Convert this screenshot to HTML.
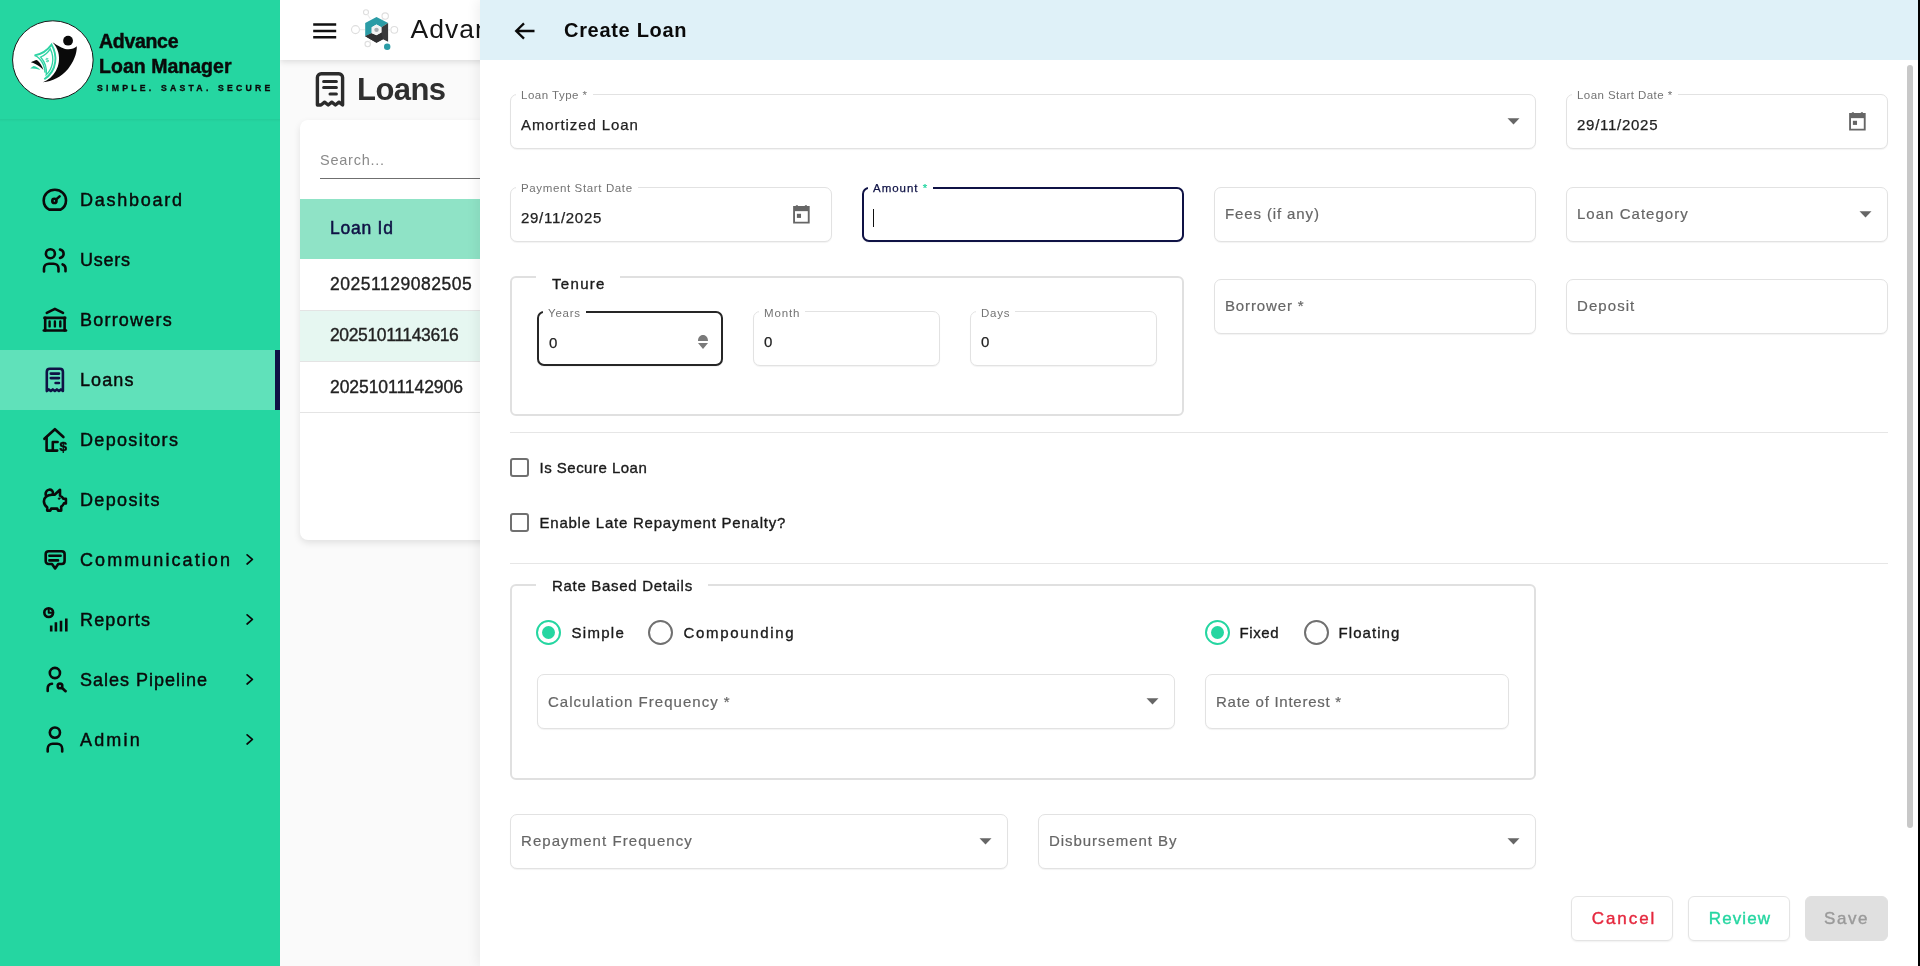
<!DOCTYPE html>
<html lang="en">
<head>
<meta charset="utf-8">
<title>Create Loan</title>
<style>
*{box-sizing:border-box;margin:0;padding:0}
html,body{width:1920px;height:966px;overflow:hidden;background:#fafafa;font-family:"Liberation Sans",sans-serif;color:#111}
.abs{position:absolute}
#sidebar,#main,#drawer{will-change:transform}
.t{position:absolute;white-space:nowrap}
#sidebar{position:absolute;left:0;top:0;width:280px;height:966px;background:#25d6a1}
#sidebar .logo-sep{position:absolute;left:0;top:119px;width:280px;height:3px;background:linear-gradient(rgba(0,0,0,.05),rgba(0,0,0,0))}
.brand{position:absolute;left:99px;font-weight:bold;color:#0a0a0a;white-space:nowrap;-webkit-text-stroke:.45px #0a0a0a}
.mi{position:absolute;left:0;width:280px;height:60px}
.mi.active{background:rgba(255,255,255,.27);border-right:5px solid #0f1245}
.mi svg.ic{position:absolute;left:41px;top:16px;width:28px;height:28px}
.mi span{position:absolute;left:80px;top:-.5px;line-height:60px;font-size:18px;color:#0a0a0a;white-space:nowrap;-webkit-text-stroke:.45px #0a0a0a}
.mi svg.chev{position:absolute;left:243px;top:22px;width:14px;height:16px}
#main{position:absolute;left:280px;top:0;width:1640px;height:966px;background:#fafafa;overflow:hidden}
#topbar{position:absolute;left:0;top:0;width:1640px;height:60px;background:#fff;box-shadow:0 2px 6px rgba(0,0,0,.12)}
#card{position:absolute;left:20px;top:120px;width:1600px;height:420px;background:#fff;border-radius:8px;box-shadow:0 3px 7px rgba(0,0,0,.10)}
.row{position:absolute;left:0;width:1600px;border-bottom:1px solid #e4e4e4;font-size:17.5px;color:#222;padding-left:30px;white-space:nowrap;-webkit-text-stroke:.35px #222}
#drawer{position:absolute;left:480px;top:0;width:1440px;height:966px;background:#fff;box-shadow:-2px 0 12px rgba(0,0,0,.07)}
#dhead{position:absolute;left:0;top:0;width:1440px;height:60px;background:#dff1f8}
.f{position:absolute;border:1px solid #e2e2e2;border-radius:7px;background:#fff;box-shadow:0 1px 1px rgba(0,0,0,.05)}
.f .lab{position:absolute;left:5px;top:-8px;padding:0 5px;background:#fff;font-size:11.5px;color:#737373;white-space:nowrap;line-height:16px}
.f .val{position:absolute;left:10px;top:0;font-size:15px;color:#222;white-space:nowrap;-webkit-text-stroke:.25px #222}
.f .ph{position:absolute;left:10px;top:0;font-size:15px;color:#666;white-space:nowrap;-webkit-text-stroke:.2px #666}
.f svg.dd{position:absolute;right:15px;width:13px;height:7px}
.f svg.cal{position:absolute;right:19.9px;width:18.8px;height:20.7px}
.fs{position:absolute;border:2px solid #e0e0e0;border-radius:6px}
.fs .leg{position:absolute;background:#fff;font-size:15px;color:#1a1a1a;white-space:nowrap;-webkit-text-stroke:.35px #1a1a1a}
.hr{position:absolute;left:30px;width:1378px;height:1px;background:#e6e6e6}
.cb{position:absolute;width:19.5px;height:19.4px;border:2px solid #707070;border-radius:3px;background:#fff}
.cl{position:absolute;font-size:15px;color:#1a1a1a;white-space:nowrap;-webkit-text-stroke:.35px #1a1a1a}
.rd{position:absolute;width:25px;height:25px;border:2px solid #707070;border-radius:50%;background:#fff}
.rd.on{border-color:#25d6a1}
.rd.on::after{content:"";position:absolute;left:4px;top:4px;width:13px;height:13px;border-radius:50%;background:#25d6a1}
.btn{position:absolute;top:896px;height:45px;border:1px solid #e4e4e4;border-radius:6px;background:#fff;font-size:17px;text-align:center;line-height:43px;box-shadow:0 1px 2px rgba(0,0,0,.06);white-space:nowrap;-webkit-text-stroke:.4px}
</style>
</head>
<body>
<div id="sidebar">
<svg class="abs" style="left:10px;top:18px" width="86" height="86" viewBox="10 18 86 86">
 <ellipse cx="52.85" cy="60" rx="40.3" ry="39.2" fill="#fff" stroke="#1a1a1a" stroke-width="1"/>
 <circle cx="68.05" cy="40.7" r="4.9" fill="#0a0a0a"/>
 <path d="M52.5 42.2 C57 45 62 48.6 67 49.2 C71 49.6 74.5 48.4 76.8 46.3 C77 54 73.5 62 68 69 C61.5 77 52 81.5 43 82.3 C48.5 80 53 76 55.8 71 C59 65.5 59.8 58.5 58.3 52.5 C57.3 48.5 55.3 45 52.5 42.2 Z" fill="#0a0a0a"/>
 <g fill="none" stroke="#2fd3a4" stroke-linejoin="miter">
  <path d="M34.6 55.4 C41.5 54.2 47.5 50.2 51.6 44.6 C54.6 50 56 56 55.2 62 C54.3 69 50 75.5 44.3 79.3" stroke-width="1.9"/>
  <path d="M34.6 55.4 C38.5 57 41.5 60.5 43.3 64.5 C44.6 67.5 45.2 70 45 72.6" stroke-width="1.5"/>
  <path d="M40.6 57 C44.6 55.6 48 52.6 50.3 48.9 C52.6 53.5 53.3 58.5 52.4 63.3 C51.5 68 49.2 72 46.2 74.8 C47 69 45 62 40.6 57 Z" stroke-width="1.3"/>
 </g>
 <text x="45.6" y="62.2" font-family="Liberation Sans, sans-serif" font-size="6" font-weight="bold" fill="#2fd3a4" transform="rotate(-12 47 60)">$</text>
 <path d="M30.9 62.2 C32.8 61.2 35 60.2 36.9 59.9 C40 62.3 42.3 65.8 43.5 70.2 C41 67 37.6 64.4 30.9 62.2 Z" fill="#0a0a0a"/>
 <path d="M30.3 68.5 C31.4 67.5 32.6 66.6 33.7 66.1 C36.2 66.7 38.6 68 40.4 69.9 C37 68.9 33.6 68.6 30.3 68.5 Z" fill="#2fd3a4"/>
</svg>
<div class="brand" style="top:31px;font-size:19.5px;line-height:20px;letter-spacing:-0.3px">Advance</div>
<div class="brand" style="top:56px;font-size:19.5px;line-height:20px;letter-spacing:0.03px">Loan Manager</div>
<div class="brand" style="left:97px;top:82.5px;font-size:8.7px;line-height:10px;-webkit-text-stroke:.3px #0a0a0a;word-spacing:.8px;letter-spacing:3.24px">SIMPLE. SASTA. SECURE</div>
<div class="logo-sep"></div>
<div class="mi" style="top:170px"><svg class="ic" viewBox="0 0 28 28" fill="none" stroke="#0a0a0a" stroke-width="2.6" stroke-linecap="round" stroke-linejoin="round"><path d="M8.2 23.6 H19.6 C22.8 21.8 25 18.4 25 14.4 C25 8.4 20.2 3.8 13.85 3.8 C7.5 3.8 2.7 8.4 2.7 14.4 C2.7 18.4 4.9 21.8 8.2 23.6 Z"/><circle cx="13.4" cy="14.9" r="2.1"/><path d="M15.2 13.4 L18.6 10.4"/></svg><span style="letter-spacing:1.73px">Dashboard</span></div>
<div class="mi" style="top:230px"><svg class="ic" viewBox="0 0 28 28" fill="none" stroke="#0a0a0a" stroke-width="2.6" stroke-linecap="round" stroke-linejoin="round"><circle cx="9.4" cy="7.7" r="4.5"/><path d="M3 25.4 V22.4 C3 19.6 5.2 17.7 8 17.7 H12.5 C15.3 17.7 17.5 19.6 17.5 22.4 V25.4"/><path d="M19 3.6 C21.2 4.2 22.6 5.8 22.6 7.8 C22.6 9.8 21.2 11.4 19 12"/><path d="M21.6 18.4 C23.4 19 24.5 20.6 24.5 22.6 V25.2"/></svg><span style="letter-spacing:0.72px">Users</span></div>
<div class="mi" style="top:290px"><svg class="ic" viewBox="0 0 28 28" fill="none" stroke="#0a0a0a" stroke-width="2.6" stroke-linecap="round" stroke-linejoin="round"><path d="M5.8 6.8 L13.9 2.8 L22 6.8"/><path d="M3.4 11.9 H24.2"/><path d="M4.2 11.9 V24.4 M23.6 11.9 V24.4"/><path d="M2.8 24.5 H25"/><path d="M8.6 15.4 V20.4 M13.9 15.4 V20.4 M19.3 15.4 V20.4" stroke-width="2.4"/></svg><span style="letter-spacing:1.21px">Borrowers</span></div>
<div class="mi active" style="top:350px"><svg class="ic" viewBox="0 0 28 28" fill="none" stroke="#0f1245" stroke-width="2.6" stroke-linecap="round" stroke-linejoin="round"><path d="M5.8 25 V5.8 C5.8 4 7 2.7 8.8 2.7 H18.9 C20.7 2.7 21.9 4 21.9 5.8 V25 L19.9 23.4 L17.9 25 L15.9 23.4 L13.85 25 L11.8 23.4 L9.8 25 L7.8 23.4 Z"/><path d="M9.8 7.6 H18 M9.8 12.1 H18 M14.6 17 H18"/></svg><span style="letter-spacing:1.09px">Loans</span></div>
<div class="mi" style="top:410px"><svg class="ic" viewBox="0 0 28 28" fill="none" stroke="#0a0a0a" stroke-width="2.6" stroke-linecap="round" stroke-linejoin="round"><path d="M3.4 12.8 L13.9 3.2 L22.4 11"/><path d="M5.6 11.4 V24.6 H16.2"/><path d="M16.6 16 H11.8 V24.6"/><text x="18.4" y="25.2" font-family="Liberation Sans, sans-serif" font-size="13.5" font-weight="bold" fill="#0a0a0a" stroke="#0a0a0a" stroke-width=".5">$</text></svg><span style="letter-spacing:1.32px">Depositors</span></div>
<div class="mi" style="top:470px"><svg class="ic" viewBox="0 0 28 28" fill="none" stroke="#0a0a0a" stroke-width="2.6" stroke-linecap="round" stroke-linejoin="round"><path d="M6.2 21.4 C4 19.8 2.9 17.6 2.9 15.2 C2.9 11.4 6.4 8.7 11 8.7 H13.6 L19 3.8 V9.6 C20.6 10.4 21.8 11.4 22.5 12.8 H24.9 V17.4 H22.9 C22.4 18.7 21.4 19.8 20.2 20.6 V24.6 H17 L16.2 22.6 H10.2 L9.4 24.6 H6.2 Z"/><path d="M5.5 10.2 C4.5 8.8 4.4 6.9 5.4 5.4 C6.7 3.4 9.5 3.1 11.1 4.7 C12 5.7 12.2 7.1 11.7 8.3"/><circle cx="18.1" cy="12.6" r="0.8" fill="#0a0a0a" stroke-width="1"/></svg><span style="letter-spacing:1.34px">Deposits</span></div>
<div class="mi" style="top:530px"><svg class="ic" viewBox="0 0 28 28" fill="none" stroke="#0a0a0a" stroke-width="2.6" stroke-linecap="round" stroke-linejoin="round"><path d="M7.6 5.2 H20.7 C22.4 5.2 23.6 6.4 23.6 8.1 V15.1 C23.6 16.8 22.4 18 20.7 18 H17.2 L14.1 22.4 L11 18 H7.6 C5.9 18 4.7 16.8 4.7 15.1 V8.1 C4.7 6.4 5.9 5.2 7.6 5.2 Z"/><path d="M8.4 9.8 H19.6 M8.4 14.4 H17"/></svg><span style="letter-spacing:2.07px">Communication</span><svg class="chev" viewBox="0 0 14 16" fill="none" stroke="#0a0a0a" stroke-width="1.7" stroke-linecap="round" stroke-linejoin="round"><path d="M4.1 2.8 L9.4 7.4 L4.1 12"/></svg></div>
<div class="mi" style="top:590px"><svg class="ic" viewBox="0 0 28 28" fill="none" stroke="#0a0a0a" stroke-width="2.6" stroke-linecap="round" stroke-linejoin="round"><circle cx="7.7" cy="6.6" r="4.4"/><path d="M7.7 3.8 V6.8 H10.8" stroke-width="2"/><path d="M10.2 19.6 V25.5 M14.9 16.3 V25.5 M20 14.7 V25.5 M25.3 12.5 V25.5" stroke-linecap="butt"/></svg><span style="letter-spacing:1.15px">Reports</span><svg class="chev" viewBox="0 0 14 16" fill="none" stroke="#0a0a0a" stroke-width="1.7" stroke-linecap="round" stroke-linejoin="round"><path d="M4.1 2.8 L9.4 7.4 L4.1 12"/></svg></div>
<div class="mi" style="top:650px"><svg class="ic" viewBox="0 0 28 28" fill="none" stroke="#0a0a0a" stroke-width="2.6" stroke-linecap="round" stroke-linejoin="round"><circle cx="13.9" cy="7" r="5.1"/><path d="M6.7 25 V22.6 C6.7 19.8 8.4 17.8 11 17.7"/><circle cx="19" cy="19.9" r="2.3"/><path d="M20.9 21.8 L24.6 25.2"/></svg><span style="letter-spacing:0.99px">Sales Pipeline</span><svg class="chev" viewBox="0 0 14 16" fill="none" stroke="#0a0a0a" stroke-width="1.7" stroke-linecap="round" stroke-linejoin="round"><path d="M4.1 2.8 L9.4 7.4 L4.1 12"/></svg></div>
<div class="mi" style="top:710px"><svg class="ic" viewBox="0 0 28 28" fill="none" stroke="#0a0a0a" stroke-width="2.6" stroke-linecap="round" stroke-linejoin="round"><circle cx="13.9" cy="6.6" r="5.1"/><path d="M6.7 25.5 V22.7 C6.7 19.7 8.9 17.7 11.7 17.7 H16.2 C19 17.7 21.2 19.7 21.2 22.7 V25.5"/></svg><span style="letter-spacing:2.17px">Admin</span><svg class="chev" viewBox="0 0 14 16" fill="none" stroke="#0a0a0a" stroke-width="1.7" stroke-linecap="round" stroke-linejoin="round"><path d="M4.1 2.8 L9.4 7.4 L4.1 12"/></svg></div>
</div>
<div id="main">
<div id="topbar">
 <svg class="abs" style="left:32px;top:22px" width="26" height="18" viewBox="0 0 26 18" stroke="#111" stroke-width="2.5" stroke-linecap="butt"><path d="M1.2 2.6 H24.2 M1.2 8.9 H24.2 M1.2 15.3 H24.2"/></svg>
 <svg class="abs" style="left:68px;top:6px" width="52" height="48" viewBox="0 0 52 48">
  <g fill="none" stroke="#dedede" stroke-width="1.1"><circle cx="18" cy="6.3" r="2.5"/><circle cx="37.2" cy="10.1" r="3.2"/><circle cx="7.5" cy="23.6" r="4"/><circle cx="46.3" cy="23.85" r="3.4"/><circle cx="19.7" cy="38.1" r="2.7"/><path d="M11.5 23.6 H17 M19.4 8.4 L22.5 13 M35.4 12.8 L34 14 M42.9 23.85 H40.5 M21.2 35.8 L23 33.6" stroke="#ececec"/></g>
  <path d="M17.2 17.1 L28.5 10.9 L40.1 17.1 L33.4 21.2 L28.5 18.5 L23.7 21.2 V27.3 L17.2 30.3 Z" fill="#2b9ca6"/>
  <path d="M17.2 30.3 L28.5 36.8 L35 33.3 L40.1 35.7 V17.1 L33.4 21.2 V26.5 L28.5 29.2 L23.7 27.3 Z" fill="#3a3a3c"/>
  <path d="M17.2 30.3 L23.7 27.3 L28.5 29.2 L33.4 26.5 L35 33.3 L28.5 36.8 Z" fill="#303032"/>
  <path d="M28.5 18.5 L33.4 21.2 V26.5 L28.5 29.2 L23.7 27.3 V21.2 Z" fill="#f4f4f4"/>
  <circle cx="28.5" cy="23.85" r="2.2" fill="#a9aeb3"/>
  <circle cx="39.2" cy="40.8" r="3.2" fill="#2b9ca6"/>
 </svg>
 <div class="t" style="left:130.5px;top:12px;font-size:26.5px;line-height:34px;color:#151515;letter-spacing:1px">Advance Loan Manager</div>
</div>
<svg class="abs" style="left:34px;top:70px" width="32" height="38" viewBox="0 0 32 38" fill="none" stroke="#2b2b2b" stroke-width="3.4" stroke-linejoin="round" stroke-linecap="round"><path d="M3.4 35 V7.6 C3.4 5.4 5 3.8 7.2 3.8 H24.8 C27 3.8 28.6 5.4 28.6 7.6 V35 L25 32.2 L21.4 35 L17.8 32.2 L14.2 35 L10.6 32.2 L7 35 Z"/><path d="M9.6 11.4 H22.4 M9.6 17.6 H22.4 M16 24 H22.4" stroke-width="3"/></svg>
<div class="t" style="left:77px;top:67.5px;font-size:31px;line-height:44px;font-weight:bold;color:#2f2f2f;letter-spacing:-0.56px">Loans</div>
<div id="card">
 <div class="t" style="left:20px;top:30px;font-size:14.5px;line-height:20px;color:#8a8a8a;letter-spacing:0.75px">Search...</div>
 <div class="abs" style="left:20px;top:58px;width:1560px;height:1px;background:#6f6f6f"></div>
 <div class="abs" style="left:0;top:79px;width:1600px;height:60px;background:#8fe3c6"></div>
 <div class="t" style="left:30px;top:79px;line-height:58px;font-size:17.5px;color:#0f1245;letter-spacing:0.75px;-webkit-text-stroke:.5px #0f1245">Loan Id</div>
 <div class="row" style="top:139px;height:52px;line-height:50px;background:#fff;letter-spacing:0.53px">20251129082505</div>
 <div class="row" style="top:191px;height:51px;line-height:49px;background:#e6f7f1;letter-spacing:-0.37px">20251011143616</div>
 <div class="row" style="top:242px;height:51px;line-height:50px;background:#fff;letter-spacing:-0.06px">20251011142906</div>
</div>
</div>
<div id="drawer">
<div id="dhead">
 <svg class="abs" style="left:33px;top:21px" width="24" height="20" viewBox="0 0 24 20" fill="none" stroke="#0a0a0a" stroke-width="2.3" stroke-linecap="butt" stroke-linejoin="miter"><path d="M21.5 10 H3.5 M11 2.4 L3.2 10 L11 17.6"/></svg>
 <div class="t" style="left:84px;top:15px;font-size:20px;line-height:30px;font-weight:bold;color:#0a0a0a;letter-spacing:0.69px">Create Loan</div>
</div>
<div class="f" style="left:30px;top:94px;width:1026px;height:55px;"><div class="lab" style="letter-spacing:0.49px;">Loan Type *</div><div class="val" style="line-height:59px;letter-spacing:0.9px">Amortized Loan</div><svg class="dd" style="top:23.3px" viewBox="0 0 13 7"><path d="M0.5 0.3 H12.5 L6.5 6.6 Z" fill="#666"/></svg></div>
<div class="f" style="left:1086px;top:94px;width:322px;height:55px;"><div class="lab" style="letter-spacing:0.43px;">Loan Start Date *</div><div class="val" style="line-height:59px;letter-spacing:0.73px">29/11/2025</div><svg class="cal" style="top:15.9px" viewBox="0 0 20 22"><path d="M5.2 1.2 V4 M14.8 1.2 V4" stroke="#666" stroke-width="2.2"/><path d="M2.2 3.2 H17.8 V19.8 H2.2 Z" fill="none" stroke="#666" stroke-width="2"/><path d="M2.2 3.2 H17.8 V7.6 H2.2 Z" fill="#666"/><rect x="5.2" y="10.4" width="4.4" height="4.4" fill="#666"/></svg></div>
<div class="f" style="left:30px;top:187px;width:322px;height:55px;"><div class="lab" style="letter-spacing:0.63px;">Payment Start Date</div><div class="val" style="line-height:59px;letter-spacing:0.7px">29/11/2025</div><svg class="cal" style="top:15.9px" viewBox="0 0 20 22"><path d="M5.2 1.2 V4 M14.8 1.2 V4" stroke="#666" stroke-width="2.2"/><path d="M2.2 3.2 H17.8 V19.8 H2.2 Z" fill="none" stroke="#666" stroke-width="2"/><path d="M2.2 3.2 H17.8 V7.6 H2.2 Z" fill="#666"/><rect x="5.2" y="10.4" width="4.4" height="4.4" fill="#666"/></svg></div>
<div class="f" style="left:382px;top:187px;width:322px;height:55px;border:2px solid #0f1245"><div class="lab" style="letter-spacing:0.97px;color:#0f1245;left:4px;top:-9px;-webkit-text-stroke:.25px #0f1245">Amount <i style="font-style:normal;color:#25d6a1;-webkit-text-stroke:.25px #25d6a1">*</i></div><div class="abs" style="left:9px;top:20px;width:1px;height:18px;background:#111"></div></div>
<div class="f" style="left:734px;top:187px;width:322px;height:55px;"><div class="ph" style="line-height:52px;letter-spacing:0.88px">Fees (if any)</div></div>
<div class="f" style="left:1086px;top:187px;width:322px;height:55px;"><div class="ph" style="line-height:52px;letter-spacing:1.03px">Loan Category</div><svg class="dd" style="top:23.3px" viewBox="0 0 13 7"><path d="M0.5 0.3 H12.5 L6.5 6.6 Z" fill="#666"/></svg></div>
<div class="fs" style="left:30px;top:276px;width:674px;height:140px"><div class="leg" style="left:24px;top:-3px;padding:0 14px 0 16px;line-height:18px;letter-spacing:1.32px">Tenure</div></div>
<div class="f" style="left:57px;top:311px;width:186px;height:55px;border:2px solid #262626"><div class="lab" style="letter-spacing:0.77px;left:4px;top:-8px">Years</div><div class="val" style="line-height:59px;letter-spacing:0px">0</div></div>
<svg class="abs" style="left:217px;top:334px" width="12" height="16" viewBox="0 0 12 16"><path d="M1 7 C1 3.5 3 1 6 1 C9 1 11 3.5 11 7 Z M1 9 H11 L6 15 Z" fill="#7a7a7a"/></svg>
<div class="f" style="left:273px;top:311px;width:187px;height:55px;"><div class="lab" style="letter-spacing:0.88px;top:-7px">Month</div><div class="val" style="line-height:59px;letter-spacing:0px">0</div></div>
<div class="f" style="left:490px;top:311px;width:187px;height:55px;"><div class="lab" style="letter-spacing:0.79px;top:-7px">Days</div><div class="val" style="line-height:59px;letter-spacing:0px">0</div></div>
<div class="f" style="left:734px;top:279px;width:322px;height:55px;"><div class="ph" style="line-height:52px;letter-spacing:0.87px">Borrower *</div></div>
<div class="f" style="left:1086px;top:279px;width:322px;height:55px;"><div class="ph" style="line-height:52px;letter-spacing:1.07px">Deposit</div></div>
<div class="hr" style="top:432px"></div>
<div class="cb" style="left:29.5px;top:457.7px"></div><div class="cl" style="left:59.5px;top:458px;line-height:20px;letter-spacing:0.49px">Is Secure Loan</div>
<div class="cb" style="left:29.5px;top:512.7px"></div><div class="cl" style="left:59.5px;top:512.5px;line-height:20px;letter-spacing:0.77px">Enable Late Repayment Penalty?</div>
<div class="hr" style="top:563px"></div>
<div class="fs" style="left:30px;top:584px;width:1026px;height:196px"><div class="leg" style="left:24px;top:-9px;padding:0 15px 0 16px;line-height:18px;letter-spacing:0.69px">Rate Based Details</div></div>
<div class="rd on" style="left:55.9px;top:619.9px"></div><div class="cl" style="left:91.5px;top:623px;line-height:20px;letter-spacing:1.28px">Simple</div>
<div class="rd" style="left:167.9px;top:619.9px"></div><div class="cl" style="left:203.5px;top:623px;line-height:20px;letter-spacing:1.66px">Compounding</div>
<div class="rd on" style="left:724.6999999999999px;top:619.9px"></div><div class="cl" style="left:759.5px;top:623px;line-height:20px;letter-spacing:0.62px">Fixed</div>
<div class="rd" style="left:823.6999999999999px;top:619.9px"></div><div class="cl" style="left:858.5px;top:623px;line-height:20px;letter-spacing:1.07px">Floating</div>
<div class="f" style="left:57px;top:674px;width:638px;height:55px;"><div class="ph" style="line-height:54px;letter-spacing:1.02px">Calculation Frequency *</div><svg class="dd" style="top:23.3px" viewBox="0 0 13 7"><path d="M0.5 0.3 H12.5 L6.5 6.6 Z" fill="#666"/></svg></div>
<div class="f" style="left:725px;top:674px;width:304px;height:55px;"><div class="ph" style="line-height:54px;letter-spacing:0.74px">Rate of Interest *</div></div>
<div class="f" style="left:30px;top:814px;width:498px;height:55px;"><div class="ph" style="line-height:52px;letter-spacing:1.06px">Repayment Frequency</div><svg class="dd" style="top:23.3px" viewBox="0 0 13 7"><path d="M0.5 0.3 H12.5 L6.5 6.6 Z" fill="#666"/></svg></div>
<div class="f" style="left:558px;top:814px;width:498px;height:55px;"><div class="ph" style="line-height:52px;letter-spacing:0.95px">Disbursement By</div><svg class="dd" style="top:23.3px" viewBox="0 0 13 7"><path d="M0.5 0.3 H12.5 L6.5 6.6 Z" fill="#666"/></svg></div>
<div class="btn" style="left:1091px;width:102px;padding-left:4px;color:#e5283e;letter-spacing:1.94px">Cancel</div>
<div class="btn" style="left:1208px;width:102px;padding-left:2px;color:#25d6a1;letter-spacing:1.12px">Review</div>
<div class="btn" style="left:1325px;width:83px;color:#9a9a9a;background:#e0e0e0;border-color:#e0e0e0;box-shadow:none;letter-spacing:1.53px">Save</div>
<div class="abs" style="left:1427px;top:65px;width:6px;height:763px;border-radius:3px;background:#c8c8c8"></div>
<div class="abs" style="left:1438px;top:0;width:2px;height:966px;background:#000"></div>
</div>
</body>
</html>
